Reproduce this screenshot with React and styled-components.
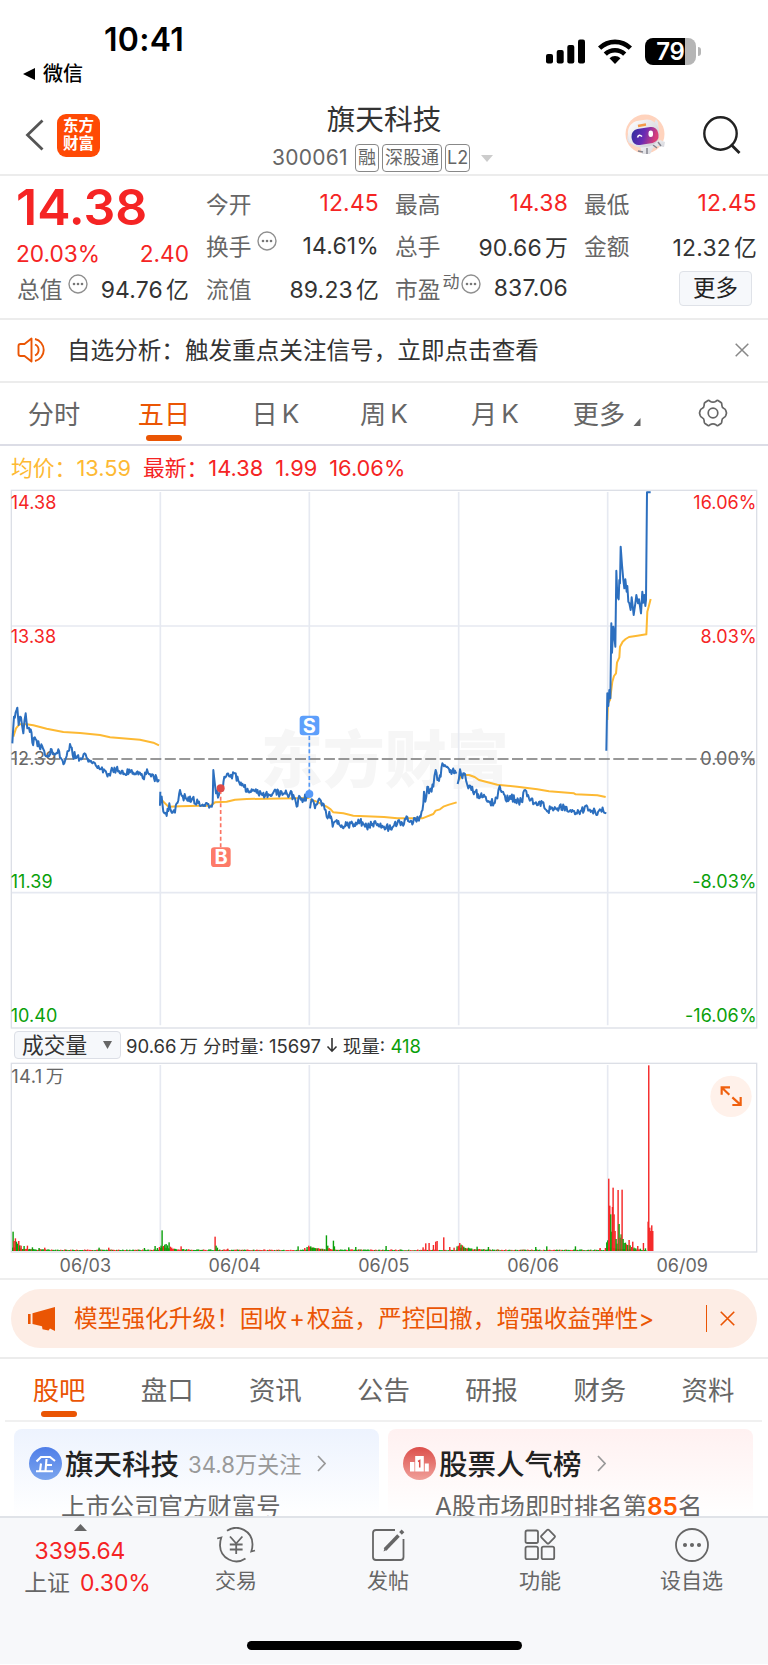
import styled, { createGlobalStyle } from "styled-components";

const red = "#f52424";
const green = "#0aa00a";
const orange = "#ea5504";

const quotes = [
    { label: "今开", value: "12.45", up: true },
    { label: "最高", value: "14.38", up: true },
    { label: "最低", value: "12.45", up: true },
    { label: "换手", value: "14.61%", info: true },
    { label: "总手", value: "90.66", unit: "万" },
    { label: "金额", value: "12.32", unit: "亿" },
    { label: "流值", value: "89.23", unit: "亿" },
    { label: "市盈", sup: "动", value: "837.06", info: true },
];

// chart units: 3 per css pixel
const price = [
    "37,790 42,710 52,683 56,735 60,710 66,735 70,760 77,700 82,745 92,748 97,788 107,778 118,800 130,808 140,828 155,808 163,822 175,808 185,838 193,850 200,828 210,792 218,825 232,828 245,838 254,820 265,845 285,850 300,868 312,868 325,882 338,870 365,872 400,878 425,882 432,898 441,868 450,882 462,895 477,898",
    "481,935 480,975 485,950 490,995 500,1008 508,970 518,998 525,998 530,970 540,930 548,948 560,958 575,960 597,965 610,978 630,980 638,970 640,870 648,940 657,945 662,925 668,932 673,890 690,890 702,880 715,902 730,918 745,935 770,938 795,948 820,938 850,942 870,940 885,955 890,980 895,955 910,958 928,943",
    "930,985 938,960 945,985 955,960 968,970 980,1010 988,995 998,1040 1010,1020 1025,1036 1045,1038 1055,1025 1065,1038 1080,1025 1095,1040 1115,1035 1128,1030 1152,1040 1167,1045 1180,1040 1197,1020 1207,1030 1217,1018 1227,1025 1247,1020 1257,1022 1262,1010 1270,970 1272,935 1276,965 1282,920 1287,940 1300,920 1307,870 1312,900 1322,890 1327,850 1342,860 1357,875 1370,880",
    "1373,912 1380,868 1387,895 1395,882 1402,915 1414,930 1427,935 1437,955 1444,940 1457,950 1470,965 1482,970 1492,955 1499,918 1507,935 1517,960 1530,948 1547,960 1564,965 1576,930 1587,955 1602,970 1614,975 1627,968 1639,990 1662,988 1677,985 1697,980 1712,990 1725,1003 1742,992 1762,980 1777,992 1787,1000 1802,990 1819,1000",
];
const surge = "1819,812 1822,640 1825,678 1828,630 1831,655 1834,430 1836,518 1840,440 1846,500 1849,272 1852,350 1856,358 1858,300 1860,310 1862,200 1866,255 1870,300 1873,325 1876,298 1880,335 1882,318 1885,365 1888,370 1892,390 1895,352 1898,378 1901,405 1906,370 1909,345 1914,370 1917,358 1923,400 1927,335 1930,368 1933,345 1936,378 1938,360 1941,37 1952,37";
const average = [
    "40,770 48,745 58,733 80,733 100,736 140,746 190,756 240,759 300,765 330,772 420,779 460,788 477,796",
    "485,960 505,980 540,979 600,977 632,977 645,967 680,965 705,959 740,957 928,954",
    "930,958 950,965 980,980 992,988 1000,997 1030,1000 1060,1007 1152,1011 1192,1015 1267,1015 1282,1009 1300,1002 1307,992 1320,988 1330,980 1347,974 1370,967",
    "1377,900 1384,885 1407,885 1424,891 1437,900 1492,914 1552,920 1612,928 1647,934 1722,940 1727,943 1792,946 1817,951",
    "1822,720 1824,670 1830,660 1837,605 1842,588 1848,580 1851,548 1858,532 1860,500 1868,485 1877,477 1887,471 1912,467 1939,463 1942,395 1946,380 1952,357",
];
const days = [481, 928, 1376, 1823];

// x, height, colour
const spikes = [
    [39, 58, "g"], [42, 30, "r"], [46, 38, "r"], [49, 28, "g"], [52, 22, "g"], [56, 30, "r"], [59, 17, "g"], [63, 16, "r"], [72, 15, "g"], [82, 16, "r"], [97, 11, "g"], [117, 9, "g"], [134, 10, "r"],
    [297, 10, "g"], [326, 10, "r"], [433, 9, "g"], [465, 15, "g"], [472, 9, "g"], [478, 12, "r"], [483, 16, "g"], [486, 62, "g"], [490, 15, "r"], [494, 19, "g"], [498, 21, "g"], [502, 17, "g"], [507, 26, "g"], [511, 13, "r"], [515, 10, "r"], [543, 14, "r"],
    [645, 43, "r"], [648, 16, "g"], [652, 10, "g"], [683, 7, "r"], [894, 14, "g"], [914, 9, "r"], [921, 12, "g"], [926, 16, "r"], [932, 14, "g"], [937, 10, "g"], [979, 47, "g"], [983, 16, "g"], [987, 9, "r"], [1000, 31, "g"], [1003, 14, "g"], [1046, 11, "g"], [1067, 12, "g"],
    [1158, 15, "g"], [1269, 11, "r"], [1277, 23, "r"], [1287, 24, "r"], [1300, 18, "r"], [1307, 28, "r"], [1311, 30, "r"], [1331, 41, "r"], [1349, 12, "r"], [1362, 10, "r"], [1371, 14, "g"], [1375, 16, "r"], [1379, 24, "r"], [1383, 19, "g"], [1387, 17, "r"], [1391, 13, "g"], [1405, 10, "g"], [1431, 13, "g"], [1465, 12, "g"], [1607, 12, "g"], [1640, 14, "g"], [1726, 14, "g"], [1800, 9, "r"], [1816, 9, "r"],
    [1820, 26, "g"], [1823, 32, "g"], [1826, 217, "r"], [1829, 136, "r"], [1832, 110, "g"], [1835, 58, "g"], [1837, 132, "r"], [1839, 190, "r"], [1842, 110, "r"], [1845, 60, "r"], [1848, 36, "g"], [1851, 22, "g"], [1854, 183, "r"], [1857, 81, "g"], [1860, 40, "r"], [1863, 50, "g"], [1866, 184, "r"], [1869, 36, "g"], [1872, 24, "g"], [1876, 25, "g"], [1879, 20, "r"], [1883, 18, "g"], [1887, 33, "r"], [1890, 17, "g"], [1894, 12, "r"], [1898, 28, "r"], [1902, 10, "g"], [1907, 8, "g"], [1913, 15, "r"], [1921, 7, "g"], [1930, 24, "r"], [1936, 8, "g"],
    [1944, 88, "r"], [1946, 557, "r"], [1949, 70, "r"], [1952, 60, "r"], [1955, 77, "r"], [1958, 60, "r"],
];

const noise = (n) => {
    const v = Math.sin(n * 12.9898) * 43758.5453;
    return v - Math.floor(v);
};

// fills the gaps between the key prices with minute ticks
const ticks = (str) => {
    const pts = str.split(" ").map((p) => p.split(",").map(Number));
    const out = [];
    pts.forEach(([x, y], i) => {
        out.push(`${x},${y}`);
        const next = pts[i + 1];
        if (!next) return;
        const steps = Math.floor((next[0] - x) / 2.5);
        for (let s = 1; s < steps; s++) {
            const t = s / steps;
            const nx = x + (next[0] - x) * t;
            const ny = y + (next[1] - y) * t + (noise(nx) - 0.5) * 22;
            out.push(`${nx.toFixed(1)},${ny.toFixed(1)}`);
        }
    });
    return out.join(" ");
};

const floor = [];
for (let x = 38; x < 1940; x += 3) {
    const start = [34, ...days].filter((d) => d <= x).pop();
    const h = 1.5 + noise(x) * 3 + 8 * Math.exp(-(x - start) / 40);
    floor.push([x, h, noise(x + 7) > 0.45 ? "g" : "r"]);
}

const Dots = ({ size = 20 }) => (
    <InfoIcon width={size} height={size} viewBox="0 0 20 20">
        <circle cx="10" cy="10" r="9" fill="none" stroke="#8f8f8f" strokeWidth="1.4" />
        {[6, 10, 14].map((x) => <circle key={x} cx={x} cy="10" r="1.3" fill="#777" />)}
    </InfoIcon>
);

const Cross = ({ size, color }) => (
    <svg width={size} height={size} viewBox="0 0 14 14">
        <path d="M.7.7l12.6 12.6M13.3.7L.7 13.3" stroke={color} strokeWidth="1.5" fill="none" />
    </svg>
);

const Chevron = () => (
    <svg width="9" height="17" viewBox="0 0 9 17">
        <path d="M1 1l7 7.5L1 16" fill="none" stroke="#999" strokeWidth="1.7" />
    </svg>
);

function Robot() {
    return (
        <svg width="42" height="42" viewBox="0 0 42 42">
            <defs>
                <linearGradient id="visor" x1="0" y1="0" x2="1" y2=".3">
                    <stop offset="0" stopColor="#2a2f9c" />
                    <stop offset=".55" stopColor="#6a2bb4" />
                    <stop offset="1" stopColor="#d93f78" />
                </linearGradient>
                <linearGradient id="shell" x1="0" y1="0" x2="1" y2="1">
                    <stop offset="0" stopColor="#ffffff" />
                    <stop offset="1" stopColor="#c9cad2" />
                </linearGradient>
            </defs>
            <circle cx="21" cy="20" r="19.5" fill="#ffd3bd" />
            <path d="M16 32l2 8h8l3-6 5-2 6 1 1-5-5-2-5 2-4-2z" fill="url(#shell)" />
            <path d="M14 37l5 1M23 34v6M29 31l4 3M34 28l3 4" stroke="#85858f" strokeWidth="1.5" fill="none" />
            <path d="M4 20q-2 5 1 9l4 1V18zM30 10l2-5 2 3 1 10z" fill="#e4e4ea" />
            <rect x="4" y="6" width="31" height="27" rx="12" transform="rotate(-8 20 19)" fill="url(#shell)" />
            <path d="M14 12l8-1.5" stroke="#f39a4a" strokeWidth="2.4" fill="none" />
            <rect x="7.5" y="14" width="27" height="16" rx="7" transform="rotate(-9 21 22)" fill="url(#visor)" />
            <path d="M13.5 23.5q1.5-4 4.5-1" stroke="#fff" strokeWidth="1.6" fill="none" />
            <rect x="24.5" y="16.5" width="4.5" height="6.5" rx="2.2" fill="#fff" />
        </svg>
    );
}

function Status() {
    return (
        <StatusBar>
            <StatusLeft>
                <Clock>10:41</Clock>
                <BackApp>
                    <svg width="12" height="12" viewBox="0 0 12 12"><path d="M12 0v12L0 6z" /></svg>
                    微信
                </BackApp>
            </StatusLeft>
            <StatusRight>
                <svg width="39" height="25" viewBox="0 0 39 25">
                    <rect x="0" y="15" width="7" height="9.5" rx="2" />
                    <rect x="10.7" y="11" width="7" height="13.5" rx="2" />
                    <rect x="21.3" y="6" width="7" height="18.5" rx="2" />
                    <rect x="32" y="0.5" width="7" height="24" rx="2" />
                </svg>
                <svg width="34" height="25" viewBox="0 0 34 25">
                    <g fill="none" stroke="#000" strokeWidth="4.6">
                        <path d="M1.6 9.2a22 22 0 0130.8 0" />
                        <path d="M7.3 15.2a14 14 0 0119.4 0" />
                    </g>
                    <path d="M11.5 19.3a8 8 0 0111 0L17 25z" />
                </svg>
                <Battery><Charge>79</Charge></Battery>
            </StatusRight>
        </StatusBar>
    );
}

function Header() {
    return (
        <Nav>
            <NavSide>
                <svg width="19" height="32" viewBox="0 0 19 32">
                    <path d="M17.5 1.5L2.5 16l15 14.5" fill="none" stroke="#555" strokeWidth="2.8" />
                </svg>
                <Logo>东方<br />财富</Logo>
            </NavSide>
            <NavTitle>
                <h1>旗天科技</h1>
                <Code>
                    <span>300061</span>
                    <Badge>融</Badge>
                    <Badge>深股通</Badge>
                    <Badge>L2</Badge>
                    <Caret />
                </Code>
            </NavTitle>
            <NavSide $end>
                <Robot />
                <svg width="38" height="38" viewBox="0 0 38 38">
                    <circle cx="17.5" cy="17.5" r="16.2" fill="none" stroke="#222" strokeWidth="2.4" />
                    <path d="M28 28.5l8.5 8.5" stroke="#222" strokeWidth="2.8" />
                </svg>
            </NavSide>
        </Nav>
    );
}

function Quote() {
    return (
        <QuotePanel>
            <QuoteMain>
                <Last>14.38</Last>
                <Change><span>20.03%</span><span>2.40</span></Change>
                <Cell>
                    <Label>总值<Dots /></Label>
                    <Value>94.76<Unit>亿</Unit></Value>
                </Cell>
            </QuoteMain>
            <QuoteGrid>
                {quotes.map((q) => (
                    <Cell key={q.label}>
                        <Label>{q.label}{q.sup && <Sup>{q.sup}</Sup>}{q.info && <Dots />}</Label>
                        <Value $up={q.up}>{q.value}{q.unit && <Unit>{q.unit}</Unit>}</Value>
                    </Cell>
                ))}
                <MoreButton>更多</MoreButton>
            </QuoteGrid>
        </QuotePanel>
    );
}

function Notice() {
    return (
        <NoticeBar>
            <svg width="32" height="26" viewBox="0 0 32 26" fill="none" stroke={orange} strokeWidth="1.9">
                <path d="M14.5 1.5v23L7.5 19H3.5Q1.5 19 1.5 17V9Q1.5 7 3.5 7H7.5z" strokeLinejoin="round" />
                <path d="M18 7.5a6 6 0 010 11M18 2a11.3 11.3 0 010 22" />
            </svg>
            <p>自选分析：触发重点关注信号，立即点击查看</p>
            <Cross size="14" color="#888" />
        </NoticeBar>
    );
}

function Periods() {
    return (
        <PeriodTabs>
            <Period>分时</Period>
            <Period $active>五日</Period>
            <Period>日<i>K</i></Period>
            <Period>周<i>K</i></Period>
            <Period>月<i>K</i></Period>
            <Period>
                更多
                <Corner width="8" height="8" viewBox="0 0 7 8"><path d="M7 0v8H0z" fill="#666" /></Corner>
            </Period>
            <Period>
                <svg width="30" height="28" viewBox="0 0 30 28" fill="none" stroke="#666" strokeWidth="1.7">
                    <path strokeLinejoin="round" d="M10 1.5Q11 1 12 2.2Q15 4.2 18 2.2Q19 1 20 1.5L23 3.5Q24 4.2 23.8 6Q23.8 8.5 26 9.5Q27.3 10 27.8 11.5L28.5 14L27.8 16.5Q27.3 18 26 18.5Q23.8 19.5 23.8 22Q24 23.8 23 24.5L20 26.5Q19 27 18 25.8Q15 23.8 12 25.8Q11 27 10 26.5L7 24.5Q6 23.8 6.2 22Q6.2 19.5 4 18.5Q2.7 18 2.2 16.5L1.5 14L2.2 11.5Q2.7 10 4 9.5Q6.2 8.5 6.2 6Q6 4.2 7 3.5Z" />
                    <circle cx="15" cy="14" r="4.8" />
                </svg>
            </Period>
        </PeriodTabs>
    );
}

function PriceChart() {
    return (
        <ChartSvg height="550" viewBox="0 0 2304 1650">
            <text x="782" y="908" fontSize="186" fontWeight="900" fill="#f6f6f6">东方财富</text>
            <g fill="none" stroke="#e6e9f1" strokeWidth="5">
                <path d="M34 438H2270M34 1238H2270" />
                {days.map((x) => <path key={x} d={`M${x} 36V1636`} />)}
            </g>
            <rect x="34" y="31" width="2236" height="1613" fill="none" stroke="#dcdfe6" strokeWidth="4" />
            <g fontSize="54" letterSpacing="0.3" fill={red}>
                <text x="32" y="86">14.38</text>
                <text x="32" y="488">13.38</text>
                <text x="2270" y="86" textAnchor="end">16.06%</text>
                <text x="2270" y="488" textAnchor="end">8.03%</text>
            </g>
            <g fontSize="54" letterSpacing="0.3" fill={green}>
                <text x="32" y="1223">11.39</text>
                <text x="32" y="1625">10.40</text>
                <text x="2270" y="1223" textAnchor="end">-8.03%</text>
                <text x="2270" y="1625" textAnchor="end">-16.06%</text>
            </g>
            <g fontSize="54" letterSpacing="0.3" fill="#666">
                <text x="32" y="855">12.39</text>
                <text x="2270" y="855" textAnchor="end">0.00%</text>
            </g>
            <path d="M34 837H2270" stroke="#777" strokeWidth="4.5" strokeDasharray="33 10.4" strokeDashoffset="17" />
            <g fill="none" strokeLinejoin="round">
                {average.map((p) => <polyline key={p} points={p} stroke="#fdb933" strokeWidth="6" />)}
                {price.map((p) => <polyline key={p} points={ticks(p)} stroke="#2c6fbf" strokeWidth="6" />)}
                <polyline points={surge} stroke="#2c6fbf" strokeWidth="6" />
            </g>
            <path d="M928 768V940" stroke="#5599f7" strokeWidth="5" strokeDasharray="12 8" />
            <path d="M662 930V1102" stroke="#fb7463" strokeWidth="5" strokeDasharray="12 8" />
            <circle cx="928" cy="942" r="12" fill="#5599f7" />
            <circle cx="662" cy="925" r="12" fill="#df4a48" />
            <rect x="899" y="707" width="59" height="59" rx="10" fill="#5d9ffb" />
            <rect x="633" y="1102" width="59" height="59" rx="10" fill="#fd7b69" />
            <g fontSize="60" fontWeight="700" fill="#fff" textAnchor="middle">
                <text x="928" y="758">S</text>
                <text x="663" y="1153">B</text>
            </g>
        </ChartSvg>
    );
}

function Volume() {
    return (
        <>
            <VolumeHead>
                <Select>
                    成交量
                    <svg width="9" height="8" viewBox="0 0 9 8"><path d="M0 0h9L4.5 8z" fill="#666" /></svg>
                </Select>
                <span>90.66<Unit>万</Unit></span>
                <span>分时量: 15697</span>
                <svg width="12" height="15" viewBox="0 0 12 15"><path d="M6 0v13M1.5 8.5L6 13.2l4.5-4.7" fill="none" stroke="#333" strokeWidth="1.6" /></svg>
                <span>现量: <Now>418</Now></span>
            </VolumeHead>
            <ChartSvg height="218" viewBox="0 0 2304 654">
                <g stroke="#e6e9f1" strokeWidth="5">
                    {days.map((x) => <path key={x} d={`M${x} 15V570`} />)}
                </g>
                <rect x="34" y="10" width="2236" height="566" fill="none" stroke="#dcdfe6" strokeWidth="4" />
                <text x="34" y="69" fontSize="55" letterSpacing="1" fill="#666">14.1<tspan dx="10">万</tspan></text>
                {[...floor, ...spikes].map(([x, h, c], i) => (
                    <rect key={i} x={x - 1.8} y={573 - h} width="4.2" height={h} fill={c === "g" ? green : red} />
                ))}
                <circle cx="2193" cy="109" r="62" fill="#fff1ea" />
                <path d="M2165 104V82H2190M2166 83L2188 104M2222 111V135H2197M2221 134L2197 112" fill="none" stroke="#f0600e" strokeWidth="6.5" />
                <g fontSize="54" fill="#666" textAnchor="middle">
                    {["06/03", "06/04", "06/05", "06/06", "06/09"].map((d, i) => (
                        <text key={d} x={256 + i * 447.7} y="636">{d}</text>
                    ))}
                </g>
            </ChartSvg>
        </>
    );
}

function Promo() {
    return (
        <PromoWrap>
            <PromoBar>
                <svg width="28" height="24" viewBox="0 0 28 24" fill={orange}>
                    <path d="M0 7h2.6v10H0zM4.5 6.3L27 0v24l-5-2.6-1.5 2-6-1.2-.5-3L4.5 17z" />
                </svg>
                <p>模型强化升级！固收<i>+</i>权益，严控回撤，增强收益弹性&gt;</p>
                <Divider />
                <Cross size="15" color={orange} />
            </PromoBar>
        </PromoWrap>
    );
}

function Cards() {
    return (
        <CardRow>
            <Card $tint="#edf3fe">
                <CardHead>
                    <svg width="33" height="33" viewBox="0 0 33 33">
                        <defs>
                            <linearGradient id="firm" x2="0" y2="1">
                                <stop stopColor="#4f7ee8" />
                                <stop offset="1" stopColor="#7ba5ee" />
                            </linearGradient>
                        </defs>
                        <circle cx="16.5" cy="16.5" r="16.5" fill="url(#firm)" />
                        <path d="M7.5 14.5L12 10h9l5 4M17.5 12l-1 12M17 18h6M12 16.5l-1 7.5M7 24.3h17" stroke="#fff" strokeWidth="2.1" fill="none" />
                    </svg>
                    <h2>旗天科技</h2>
                    <Fans>34.8万关注</Fans>
                    <Chevron />
                </CardHead>
                <CardText>上市公司官方财富号</CardText>
            </Card>
            <Card $tint="#fff1f1">
                <CardHead>
                    <svg width="33" height="33" viewBox="0 0 33 33">
                        <defs>
                            <linearGradient id="rank" x2="0" y2="1">
                                <stop stopColor="#dc4f4b" />
                                <stop offset="1" stopColor="#f0a09a" />
                            </linearGradient>
                        </defs>
                        <circle cx="16.5" cy="16.5" r="16.5" fill="url(#rank)" />
                        <path d="M7 15h4.4v9.5H7zM12.2 9h8.6v15.500h-8.6zM21.8 16.5h4v8h-4z" fill="#fff" />
                        <path d="M15 14.5l1.7-1v7" fill="none" stroke="#dc4f4b" strokeWidth="1.5" />
                    </svg>
                    <h2>股票人气榜</h2>
                    <Chevron />
                </CardHead>
                <CardText>A股市场即时排名第<b>85</b>名</CardText>
            </Card>
        </CardRow>
    );
}

function BottomBar() {
    return (
        <Bottom>
            <Tools>
                <Index>
                    <svg width="13" height="7" viewBox="0 0 13 7"><path d="M6.5 0L13 7H0z" fill="#666" /></svg>
                    <Point>3395.64</Point>
                    <IndexRow>上证<Point>0.30%</Point></IndexRow>
                </Index>
                <Tool>
                    <svg width="40" height="36" viewBox="0 0 40 36">
                        <path d="M11 3.8A16.3 16.3 0 0136.5 17.5Q36.5 21 35.3 24.5L39 23.5M29.5 31.5A16.3 16.3 0 014 18.5Q4 14 5.3 10.5L1.2 11.5" />
                        <path d="M14 9.5l6.2 7 6.2-7M13.8 17.5h12.8M13.8 22.5h12.8M20.2 16.5v10.5" />
                    </svg>
                    交易
                </Tool>
                <Tool>
                    <svg width="34" height="36" viewBox="0 0 34 36">
                        <path d="M24 3H5Q2 3 2 6V30Q2 33 5 33H29.5Q32.5 33 32.5 30V12" />
                        <path d="M14 22.5L27.5 8.5" strokeWidth="3.6" />
                        <path d="M12.5 24.5l1.5-4.500 2.5 2.5z" fill="#666" stroke="none" />
                        <path d="M29.5 6.3L32 3.8" strokeWidth="3.8" />
                    </svg>
                    发帖
                </Tool>
                <Tool>
                    <svg width="32" height="36" viewBox="0 0 32 36">
                        <rect x="1.5" y="3.5" width="12.5" height="12.5" rx="1.8" />
                        <rect x="1.5" y="19.7" width="12.5" height="12.5" rx="1.8" />
                        <rect x="17.7" y="19.7" width="12.5" height="12.5" rx="1.8" />
                        <rect x="18.7" y="4.3" width="10.6" height="10.6" rx="1.5" transform="rotate(45 24 9.6)" />
                    </svg>
                    功能
                </Tool>
                <Tool>
                    <svg width="34" height="36" viewBox="0 0 34 36">
                        <circle cx="17" cy="18" r="16" />
                        {[10, 17, 24].map((x) => <circle key={x} cx={x} cy="18" r="1.2" strokeWidth="1.7" fill="#666" />)}
                    </svg>
                    设自选
                </Tool>
            </Tools>
            <HomeLine />
        </Bottom>
    );
}

export default function App() {
    return (
        <Screen>
            <Global />
            <Status />
            <Header />
            <Quote />
            <Notice />
            <Periods />
            <Averages>
                <Avg>均价：13.59</Avg>
                <span>最新：14.38</span>
                <span>1.99</span>
                <span>16.06%</span>
            </Averages>
            <PriceChart />
            <Volume />
            <Promo />
            <SectionTabs>
                {["股吧", "盘口", "资讯", "公告", "研报", "财务", "资料"].map((t, i) => (
                    <Section key={t} $active={i === 0}>{t}</Section>
                ))}
            </SectionTabs>
            <Cards />
            <BottomBar />
        </Screen>
    );
}

const Global = createGlobalStyle`
* { box-sizing: border-box; margin: 0; padding: 0; }
body {
    background: #fff;
    font-family: Inter, "Noto Sans CJK SC", sans-serif;
    color: #333;
}
svg { display: block; flex: none; }
i { font-style: normal; }
`;

const Screen = styled.div`
width: 768px;
height: 1665px;
overflow: hidden;
display: flex;
flex-direction: column;
white-space: nowrap;
&>*{
    flex: none;
}
`;

const StatusBar = styled.div`
height: 96px;
display: flex;
justify-content: space-between;
color: #000;
`;

const StatusLeft = styled.div`
padding: 21px 0 0 23px;
`;

const Clock = styled.div`
padding-left: 81px;
font-size: 32px;
line-height: 38px;
font-weight: 600;
letter-spacing: 0.3px;
`;

const BackApp = styled.div`
display: flex;
align-items: center;
gap: 8px;
margin-top: 1px;
font-size: 20px;
line-height: 28px;
font-weight: 500;
`;

const StatusRight = styled.div`
display: flex;
align-items: center;
height: 27px;
margin: 38px 67px 0 0;
gap: 13px;
`;

const Battery = styled.div`
display: flex;
align-items: center;
width: 56px;
height: 27px;
&::before{
    content: "";
    order: 2;
    width: 3px;
    height: 9px;
    margin-left: 2px;
    border-radius: 0 4px 4px 0;
    background: #b5b5b5;
}
`;

const Charge = styled.div`
width: 51px;
height: 27px;
border-radius: 8px;
background: linear-gradient(90deg, #000 79%, #b5b5b5 79%);
color: #fff;
font-size: 24px;
line-height: 27px;
font-weight: 600;
text-align: center;
letter-spacing: -0.3px;
`;

const Nav = styled.div`
display: flex;
justify-content: space-between;
height: 80px;
border-bottom: 2px solid #ececec;
`;

const NavSide = styled.div`
display: flex;
align-items: center;
width: 200px;
height: 78px;
padding: ${props => props.$end ? "0 27px 0 0" : "0 0 0 25px"};
justify-content: ${props => props.$end ? "flex-end" : "flex-start"};
gap: ${props => props.$end ? "37px" : "13px"};
`;

const Logo = styled.div`
width: 43px;
height: 43px;
border-radius: 9px;
background: #ff4a05;
color: #fff;
font-size: 15.5px;
font-weight: 700;
line-height: 18px;
padding-top: 3px;
text-align: center;
`;

const NavTitle = styled.div`
display: flex;
flex-direction: column;
align-items: center;
padding-top: 6px;
&>h1{
    font-size: 28.7px;
    line-height: 36px;
    font-weight: 400;
}
`;

const Code = styled.div`
display: flex;
align-items: center;
gap: 3px;
margin: 6px 0 0 -3px;
color: #666;
font-size: 21px;
line-height: 28px;
&>span:first-child{
    margin-right: 4px;
    letter-spacing: 0.3px;
}
`;

const Badge = styled.span`
height: 28px;
padding: 0 2px;
border: 1.5px solid #888;
border-radius: 4px;
font-size: 18px;
line-height: 25px;
&:nth-child(4){
    padding: 0 1px;
}
`;

const Caret = styled.span`
margin-left: 8px;
border: 6px solid transparent;
border-top: 7px solid #ccc;
border-bottom: 0;
`;

const QuotePanel = styled.div`
display: flex;
height: 144px;
padding: 7px 11px 0 17px;
border-bottom: 2px solid #ececec;
gap: 17px;
`;

const QuoteMain = styled.div`
width: 172px;
`;

const Last = styled.div`
margin-left: -1px;
font-size: 50px;
line-height: 49px;
height: 50px;
font-weight: 600;
color: ${red};
`;

const Change = styled.div`
display: flex;
justify-content: space-between;
height: 34px;
line-height: 42px;
font-size: 22.7px;
margin-left: -1px;
color: ${red};
`;

const QuoteGrid = styled.div`
flex: 1;
display: grid;
grid-template-columns: 173px 173px 173px;
grid-auto-rows: 42.5px;
column-gap: 16px;
margin-top: -1px;
`;

const Cell = styled.div`
display: flex;
justify-content: space-between;
align-items: center;
height: 42px;
`;

const Label = styled.div`
display: flex;
align-items: center;
font-size: 22.7px;
color: #666;
`;

const InfoIcon = styled.svg`
margin: -9px 0 0 6px;
`;

const Sup = styled.sup`
font-size: 17px;
line-height: 17px;
margin: -12px -4px 0 2px;
`;

const Value = styled.div`
font-size: 22.9px;
letter-spacing: 0.2px;
color: ${props => props.$up ? red : "#333"};
`;

const Unit = styled.span`
margin-left: 3px;
`;

const MoreButton = styled.button`
justify-self: end;
align-self: center;
width: 73px;
height: 35px;
margin-right: 5px;
border: 1.5px solid #dfe2e8;
border-radius: 4px;
background: #f6f8fb;
font: inherit;
font-size: 22.5px;
line-height: 30px;
color: #222;
`;

const NoticeBar = styled.div`
display: flex;
align-items: center;
height: 63px;
padding: 0 19px 2px 17px;
border-bottom: 2px solid #ececec;
&>p{
    flex: 1;
    margin: -1px 0 0 18px;
    font-size: 23.6px;
}
`;

const PeriodTabs = styled.div`
display: grid;
grid-template-columns: 108px 112px 111px 106px 116px 108px 104px;
height: 63px;
border-bottom: 2px solid #dcdde6;
`;

const Period = styled.div`
display: flex;
justify-content: center;
align-items: center;
position: relative;
height: 62px;
padding-bottom: 2px;
font-size: 26.2px;
color: ${props => props.$active ? orange : "#666"};
&>i{
    margin-left: 4px;
}
&::after{
    content: "";
    display: ${props => props.$active ? "block" : "none"};
    position: absolute;
    bottom: 4px;
    width: 36px;
    height: 6px;
    border-radius: 3px;
    background: ${orange};
}
`;

const Corner = styled.svg`
align-self: flex-end;
margin: 0 0 17px 8px;
`;

const Averages = styled.div`
display: flex;
align-items: baseline;
height: 34px;
padding: 5px 0 0 11px;
gap: 12px;
font-size: 21.8px;
line-height: 34px;
color: ${red};
`;

const Avg = styled.span`
color: #fdb933;
`;

const ChartSvg = styled.svg`
width: 768px;
`;

const VolumeHead = styled.div`
display: flex;
align-items: center;
height: 30px;
padding-left: 14px;
gap: 5px;
font-size: 18.5px;
`;

const Select = styled.div`
display: flex;
align-items: center;
justify-content: space-between;
width: 107px;
height: 28px;
padding: 0 8px 1px 7px;
border: 1.5px solid #dcdfe6;
border-radius: 4px;
background: #f6f8fb;
font-size: 21.7px;
line-height: 26px;
`;

const Now = styled.span`
color: ${green};
`;

const PromoWrap = styled.div`
height: 81px;
padding: 9px 11px;
border-top: 2px solid #eee;
border-bottom: 2px solid #ececec;
`;

const PromoBar = styled.div`
display: flex;
align-items: center;
height: 59px;
padding: 0 22px 0 17px;
border-radius: 30px;
background: #fdede5;
color: ${orange};
&>p{
    flex: 1;
    margin: -3px 0 0 18px;
    font-size: 23.7px;
}
i{
    margin: 0 2px;
}
`;

const Divider = styled.div`
width: 1.5px;
height: 27px;
margin-right: 13px;
background: ${orange};
`;

const SectionTabs = styled.div`
display: flex;
margin: 0 6px 0 5px;
height: 63px;
border-bottom: 2px solid #f0f0f0;
`;

const Section = styled.div`
display: flex;
justify-content: center;
align-items: center;
position: relative;
flex: 1;
padding-bottom: 2px;
font-size: 26.4px;
color: ${props => props.$active ? orange : "#666"};
&::after{
    content: "";
    display: ${props => props.$active ? "block" : "none"};
    position: absolute;
    bottom: 3px;
    width: 36px;
    height: 6px;
    border-radius: 3px;
    background: ${orange};
}
`;

const CardRow = styled.div`
display: flex;
gap: 9px;
height: 94px;
padding: 7px 15px 0 14px;
overflow: hidden;
`;

const Card = styled.div`
flex: 1;
height: 110px;
padding: 16px 0 0 15px;
border-radius: 8px 8px 0 0;
background: linear-gradient(${props => props.$tint}, #fff 80%);
`;

const CardHead = styled.div`
display: flex;
align-items: center;
height: 36px;
&>h2{
    margin: -2px 0 0 3px;
    font-size: 28.5px;
    font-weight: 500;
    color: #222;
}
&>svg:last-child{
    margin-left: 15px;
}
`;

const Fans = styled.span`
margin-left: 9px;
font-size: 22.2px;
color: #999;
`;

const CardText = styled.p`
margin: 7px 0 0 32px;
font-size: 24.4px;
line-height: 36px;
color: #666;
&>b{
    color: #ff5a00;
    font-weight: 600;
}
`;

const Bottom = styled.div`
height: 148px;
border-top: 2px solid #e0e3e8;
background: #f7f8fa;
`;

const Tools = styled.div`
display: grid;
grid-template-columns: 160px 152px 152px 152px 151px;
height: 123px;
`;

const Index = styled.div`
display: flex;
flex-direction: column;
align-items: center;
padding-top: 6px;
font-size: 22.9px;
line-height: 32px;
color: #666;
&>svg{
    margin-bottom: 4px;
}
`;

const IndexRow = styled.div`
display: flex;
gap: 10px;
margin-left: 15px;
`;

const Point = styled.span`
color: ${red};
`;

const Tool = styled.div`
display: flex;
flex-direction: column;
align-items: center;
padding-top: 9px;
gap: 1px;
font-size: 21px;
line-height: 34px;
color: #666;
&>svg{
    fill: none;
    stroke: #666;
    stroke-width: 1.8;
}
`;

const HomeLine = styled.div`
width: 275px;
height: 9px;
margin: 0 auto;
border-radius: 5px;
background: #000;
`;
